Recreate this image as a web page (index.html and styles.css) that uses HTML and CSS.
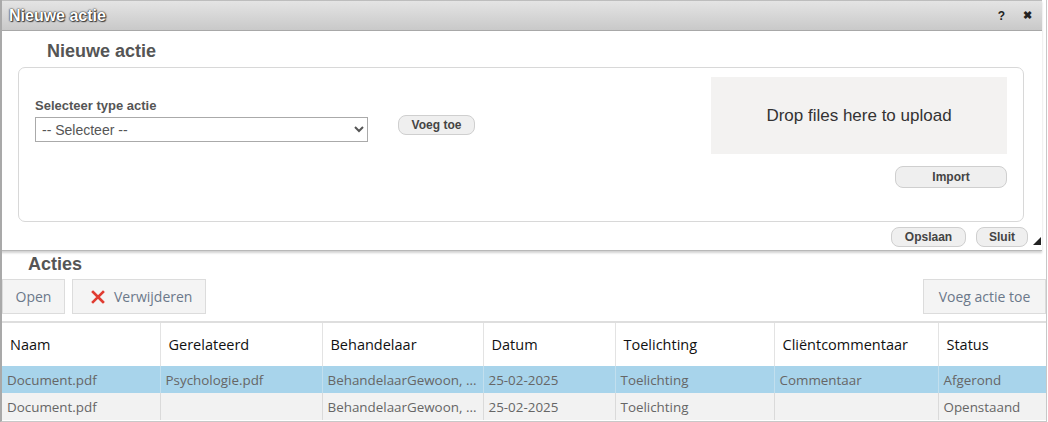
FILE: index.html
```html
<!DOCTYPE html>
<html lang="nl">
<head>
    <meta charset="UTF-8">
    <meta name="viewport" content="width=device-width, initial-scale=1.0">
    <title>Nieuwe actie</title>
    <link rel="stylesheet" href="styles.css">
</head>
<body>
    <div class="page">
        <div class="dialog">
            <div class="dialog-titlebar">
                <span class="dialog-title">Nieuwe actie</span>
                <span class="dialog-icons">
                    <span class="icon-help">?</span>
                    <span class="icon-close">&#10006;</span>
                </span>
            </div>
            <div class="dialog-content">
                <h3 class="section-title">Nieuwe actie</h3>
                <div class="panel">
                    <div class="panel-left">
                        <div class="form-group">
                            <label for="typeActie">Selecteer type actie</label>
                            <div class="select-wrap">
                                <select id="typeActie">
                                    <option>-- Selecteer --</option>
                                </select>
                            </div>
                        </div>
                        <button class="btn-small btn-add">Voeg toe</button>
                    </div>
                    <div class="panel-right">
                        <div class="dropzone">Drop files here to upload</div>
                        <button class="btn-small btn-import">Import</button>
                    </div>
                </div>
            </div>
            <div class="dialog-buttons">
                <button class="btn-small btn-save">Opslaan</button>
                <button class="btn-small btn-close">Sluit</button>
                <span class="resize-handle"></span>
            </div>
        </div>

        <h3 class="list-title">Acties</h3>
        <div class="toolbar">
            <button class="tool-btn btn-open">Open</button>
            <button class="tool-btn btn-delete">
                <svg width="14" height="14" viewBox="0 0 14 14"><path d="M2 2 L12 12 M12 2 L2 12" stroke="#e03c31" stroke-width="2.6" stroke-linecap="square"/></svg>
                Verwijderen
            </button>
            <span class="spacer"></span>
            <button class="tool-btn btn-new">Voeg actie toe</button>
        </div>

        <table class="grid">
            <colgroup>
                <col style="width: 158px">
                <col style="width: 162px">
                <col style="width: 161px">
                <col style="width: 132px">
                <col style="width: 159px">
                <col style="width: 164px">
                <col>
            </colgroup>
            <thead>
                <tr>
                    <th>Naam</th>
                    <th>Gerelateerd</th>
                    <th>Behandelaar</th>
                    <th>Datum</th>
                    <th>Toelichting</th>
                    <th>Cliëntcommentaar</th>
                    <th>Status</th>
                </tr>
            </thead>
            <tbody>
                <tr class="selected">
                    <td>Document.pdf</td>
                    <td>Psychologie.pdf</td>
                    <td>BehandelaarGewoon, ...</td>
                    <td>25-02-2025</td>
                    <td>Toelichting</td>
                    <td>Commentaar</td>
                    <td>Afgerond</td>
                </tr>
                <tr>
                    <td>Document.pdf</td>
                    <td></td>
                    <td>BehandelaarGewoon, ...</td>
                    <td>25-02-2025</td>
                    <td>Toelichting</td>
                    <td></td>
                    <td>Openstaand</td>
                </tr>
            </tbody>
        </table>
    </div>
</body>
</html>
```

FILE: styles.css
```css
html, body {
    margin: 0;
    padding: 0;
    background: #fff;
}
body {
    font-family: "Liberation Sans", Arial, sans-serif;
    color: #555;
}
.page {
    width: 1047px;
    height: 422px;
    box-sizing: border-box;
    border-left: 2px solid #a9a9a9;
    border-right: 1px solid #c8c8c8;
    border-bottom: 1px solid #c8c8c8;
    overflow: hidden;
}

/* dialog */
.dialog {
    width: 1042px;
    margin-left: -2px;
    height: 251px;
    box-sizing: border-box;
    border-left: 2px solid #a9a9a9;
    border-bottom: 1px solid #b8b8b8;
    box-shadow: 0 2px 2px rgba(0, 0, 0, 0.18);
    background: #fff;
    display: flex;
    flex-direction: column;
}
.dialog-titlebar {
    height: 32px;
    box-sizing: border-box;
    background: linear-gradient(#e4e4e4, #c9c9c9);
    border-top: 1px solid #bdbdbd;
    border-bottom: 1px solid #a8a8a8;
    display: flex;
    align-items: center;
    padding: 0 10px 0 7px;
}
.dialog-title {
    flex: 1;
    font-weight: bold;
    font-size: 16px;
    color: #fff;
    text-shadow: 0 0 2px #222, 0 0 1px #222, 1px 1px 1px #444;
}
.dialog-icons {
    display: flex;
    gap: 18px;
    font-size: 12px;
    font-weight: bold;
    color: #222;
}
.icon-close {
    font-size: 11px;
}
.dialog-content {
    flex: 1;
    padding: 0 18px 0 16px;
}
.section-title {
    margin: 10px 0 5px 29px;
    font-size: 18px;
    font-weight: bold;
    color: #555;
}
.panel {
    height: 155px;
    box-sizing: border-box;
    border: 1px solid #d8d8d8;
    border-radius: 7px;
    display: flex;
    justify-content: space-between;
    padding: 9px 16px 0 16px;
}
.panel-left {
    display: flex;
    align-items: flex-start;
    gap: 30px;
    padding-top: 21px;
}
.form-group label {
    display: block;
    font-size: 13px;
    font-weight: bold;
    color: #555;
    margin-bottom: 4px;
}
.select-wrap select {
    width: 333px;
    height: 25px;
    border: 1px solid #aaa;
    background: #fff;
    font-family: "Liberation Sans", Arial, sans-serif;
    font-size: 14px;
    color: #555;
    padding: 0 2px;
}
.btn-small {
    font-family: "Liberation Sans", Arial, sans-serif;
    font-size: 12px;
    font-weight: bold;
    color: #444;
    background: #efefef;
    border: 1px solid #cfcfcf;
    border-radius: 8px;
    height: 20px;
    padding: 0;
    cursor: pointer;
}
.btn-add {
    width: 77px;
    margin-top: 17px;
}
.panel-right {
    display: flex;
    flex-direction: column;
    align-items: flex-end;
    gap: 12px;
}
.dropzone {
    width: 296px;
    height: 77px;
    background: #f3f2f1;
    color: #333;
    font-size: 17px;
    display: flex;
    align-items: center;
    justify-content: center;
}
.btn-import {
    width: 112px;
    height: 22px;
}
.dialog-buttons {
    height: 27px;
    display: flex;
    justify-content: flex-end;
    align-items: center;
    gap: 10px;
    padding-right: 4px;
    padding-top: 1px;
    position: relative;
}
.btn-save {
    width: 75px;
}
.btn-close {
    width: 52px;
    margin-right: 10px;
}
.resize-handle {
    position: absolute;
    right: 1px;
    bottom: 5px;
    width: 0;
    height: 0;
    border-left: 8px solid transparent;
    border-bottom: 8px solid #222;
}

/* actions list */
.list-title {
    margin: 3px 0 4px 26px;
    font-size: 18px;
    font-weight: bold;
    color: #555;
}
.toolbar {
    display: flex;
    gap: 7px;
    height: 35px;
}
.spacer {
    flex: 1;
}
.tool-btn {
    font-family: "Open Sans", "Noto Sans", sans-serif;
    font-size: 14px;
    color: #6b788a;
    background: #f4f4f4;
    border: 1px solid #dcdcdc;
    padding: 0 12px;
    height: 35px;
    display: flex;
    align-items: center;
    gap: 9px;
    cursor: pointer;
}
.btn-open {
    width: 63px;
    justify-content: center;
}
.btn-delete {
    width: 134px;
    padding-left: 18px;
}
.btn-new {
    width: 123px;
    justify-content: center;
}

.grid {
    width: 100%;
    margin-top: 7px;
    border-collapse: collapse;
    table-layout: fixed;
    font-family: "Open Sans", "Noto Sans", sans-serif;
    border-top: 2px solid #dedede;
}
.grid th {
    height: 43px;
    text-align: left;
    font-weight: normal;
    font-size: 14.5px;
    color: #111;
    padding: 0 8px;
    border-left: 1px solid #e3e3e3;
    white-space: nowrap;
}
.grid td {
    height: 27px;
    font-size: 13.4px;
    color: #666;
    padding: 0 5px;
    border-left: 1px solid #dadada;
    white-space: nowrap;
    overflow: hidden;
}
.grid th:first-child,
.grid td:first-child {
    border-left: none;
}
.grid tbody tr {
    background: #f2f2f2;
}
.grid tbody tr.selected {
    background: #a8d4eb;
}
.grid tr.selected td {
    border-left-color: #c2dfee;
}
```
